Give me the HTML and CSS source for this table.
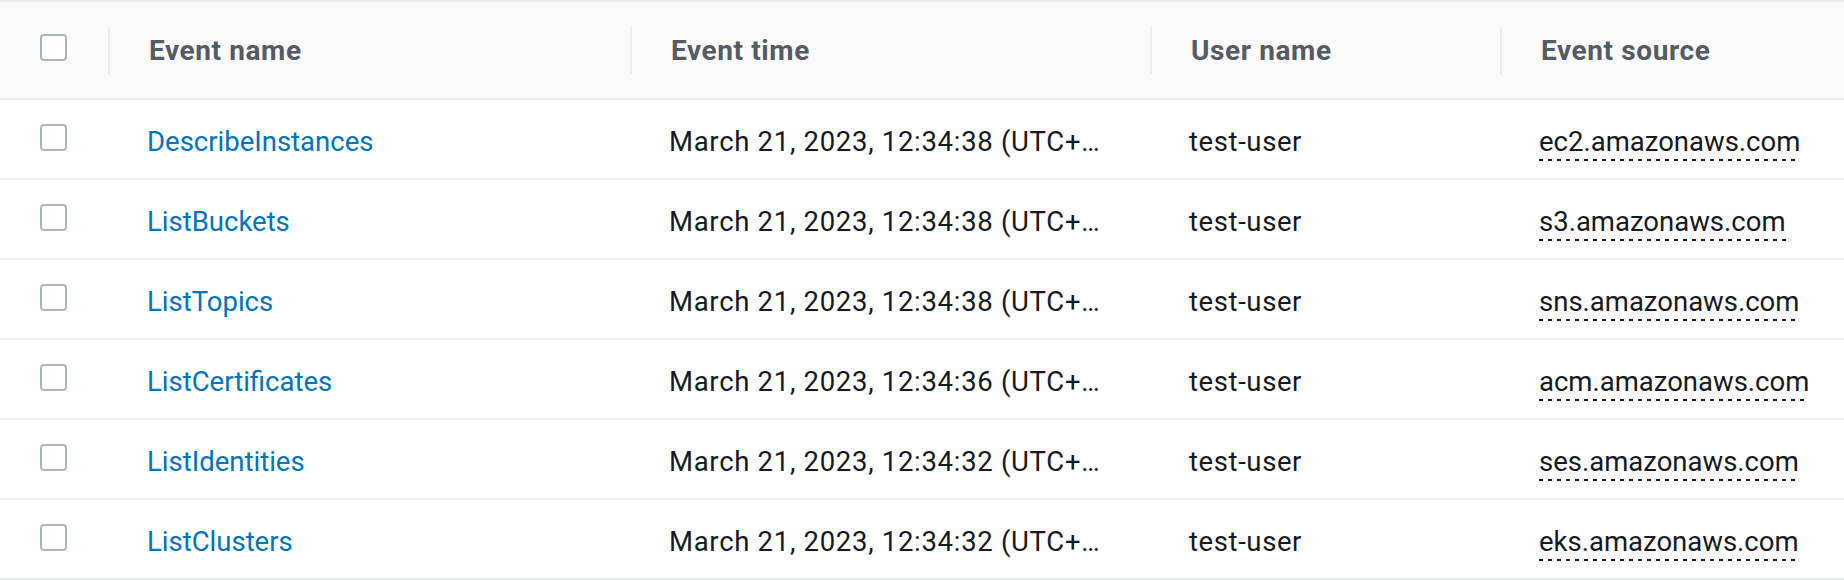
FILE: index.html
```html
<!DOCTYPE html>
<html lang="en">
<head>
<meta charset="utf-8">
<title>Event history</title>
<link rel="stylesheet" href="styles.css">
</head>
<body>
<div class="table">
  <div class="row head">
    <div class="sel"><span class="cb"></span></div>
    <div class="hcell">Event name</div>
    <div class="hcell">Event time</div>
    <div class="hcell">User name</div>
    <div class="hcell">Event source</div>
  </div>
  <div class="row">
    <div class="sel"><span class="cb"></span></div>
    <div class="cell"><a class="link" href="#">DescribeInstances</a></div>
    <div class="cell date">March 21, 2023, 12:34:38 (UTC+…</div>
    <div class="cell user">test-user</div>
    <div class="cell"><span class="src">ec2.amazonaws.com</span></div>
  </div>
  <div class="row">
    <div class="sel"><span class="cb"></span></div>
    <div class="cell"><a class="link" href="#">ListBuckets</a></div>
    <div class="cell date">March 21, 2023, 12:34:38 (UTC+…</div>
    <div class="cell user">test-user</div>
    <div class="cell"><span class="src">s3.amazonaws.com</span></div>
  </div>
  <div class="row">
    <div class="sel"><span class="cb"></span></div>
    <div class="cell"><a class="link" href="#">ListTopics</a></div>
    <div class="cell date">March 21, 2023, 12:34:38 (UTC+…</div>
    <div class="cell user">test-user</div>
    <div class="cell"><span class="src">sns.amazonaws.com</span></div>
  </div>
  <div class="row">
    <div class="sel"><span class="cb"></span></div>
    <div class="cell"><a class="link" href="#">ListCertificates</a></div>
    <div class="cell date">March 21, 2023, 12:34:36 (UTC+…</div>
    <div class="cell user">test-user</div>
    <div class="cell"><span class="src">acm.amazonaws.com</span></div>
  </div>
  <div class="row">
    <div class="sel"><span class="cb"></span></div>
    <div class="cell"><a class="link" href="#">ListIdentities</a></div>
    <div class="cell date">March 21, 2023, 12:34:32 (UTC+…</div>
    <div class="cell user">test-user</div>
    <div class="cell"><span class="src">ses.amazonaws.com</span></div>
  </div>
  <div class="row">
    <div class="sel"><span class="cb"></span></div>
    <div class="cell"><a class="link" href="#">ListClusters</a></div>
    <div class="cell date">March 21, 2023, 12:34:32 (UTC+…</div>
    <div class="cell user">test-user</div>
    <div class="cell"><span class="src">eks.amazonaws.com</span></div>
  </div>
</div>
</body>
</html>
```

FILE: styles.css
```css
html, body {
  margin: 0;
  padding: 0;
  background: #ffffff;
}

body {
  font-family: Roboto, "Liberation Sans", sans-serif;
  font-size: 27.5px;
  line-height: 32px;
  color: #16191f;
}

.table {
  border-top: 2px solid #eaeded;
}

.row {
  display: grid;
  grid-template-columns: 108px 522px 520px 350px 1fr;
  height: 80px;
  box-sizing: border-box;
  border-bottom: 2px solid #eaeded;
}

.head {
  height: 98px;
  background: #fafafa;
  align-items: center;
}

.sel {
  align-self: start;
  padding-left: 40px;
  padding-top: 24px;
}

.head .sel {
  padding-top: 32px;
}

.cb {
  display: block;
  width: 27px;
  height: 27px;
  box-sizing: border-box;
  border: 2px solid #aab7b8;
  border-radius: 4px;
  background: #ffffff;
}

.hcell {
  height: 47px;
  box-sizing: border-box;
  border-left: 2px solid #eaeded;
  display: flex;
  align-items: center;
  padding-left: 39px;
  padding-top: 2.6px;
  font-size: 28px;
  letter-spacing: 0.6px;
  font-weight: 700;
  color: #545b64;
  white-space: nowrap;
}

.cell {
  padding-left: 39px;
  padding-top: 25.5px;
  white-space: nowrap;
  overflow: hidden;
}

.date {
  letter-spacing: 0.7px;
}

.user {
  letter-spacing: 0.6px;
}

.link {
  color: #0073bb;
  text-decoration: none;
}

.src {
  padding-bottom: 3.3px;
  background-image: linear-gradient(to right, #16191f 4px, transparent 4px);
  background-size: 9px 2px;
  background-repeat: repeat-x;
  background-position: left bottom;
}
```
